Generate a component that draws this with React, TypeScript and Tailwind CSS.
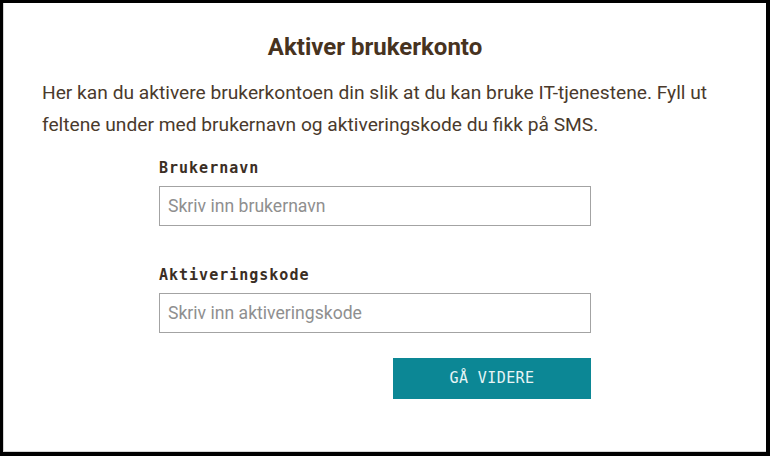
import React from 'react';

const sans = "font-['Roboto','Liberation_Sans',sans-serif]";
const mono = "font-['DejaVu_Sans_Mono','Liberation_Mono',monospace]";

const Field = ({ label, placeholder, className }: { label: string; placeholder: string; className?: string }) => (
    <div className={className}>
        <label className={`block ${mono} text-[15px] leading-5 font-bold tracking-[1px] text-[#3b2e24] mb-2`}>{label}</label>
        <input
            type="text"
            placeholder={placeholder}
            className={`block w-full h-10 border border-[#a3a3a3] bg-white px-2 ${sans} text-[17.6px] text-[#333] placeholder:text-[#8f8f8f] outline-none`}
        />
    </div>
);

export default function App() {
    return (
        <div className="w-[770px] h-[456px] bg-white border-black border-l-[3px] border-t-[3px] border-r-4 border-b-4 shadow-[inset_1px_-1px_0_#d4d4d4]">
            <div className={`${sans} pl-[39px] pr-[58px] pt-[30px]`}>
                <h1 className="text-center text-[24px] leading-7 font-bold text-[#47331f]">Aktiver brukerkonto</h1>

                {/* intro text */}
                <p className="mt-4 text-[19.2px] leading-8 text-[#4a3a2c]">
                    Her kan du aktivere brukerkontoen din slik at du kan bruke IT-tjenestene. Fyll ut feltene under med brukernavn og aktiveringskode du fikk på SMS.
                </p>

                <form className="w-[432px] mx-auto mt-[17px]" onSubmit={e => e.preventDefault()}>
                    <Field label="Brukernavn" placeholder="Skriv inn brukernavn" />
                    <Field label="Aktiveringskode" placeholder="Skriv inn aktiveringskode" className="mt-[39px]" />
                    <div className="flex justify-end mt-[25px]">
                        <button type="submit" className={`w-[198px] h-[41px] bg-[#0c8795] text-[#e6f4f5] ${mono} text-[15px] tracking-[0.4px]`}>
                            GÅ VIDERE
                        </button>
                    </div>
                </form>
            </div>
        </div>
    );
}
